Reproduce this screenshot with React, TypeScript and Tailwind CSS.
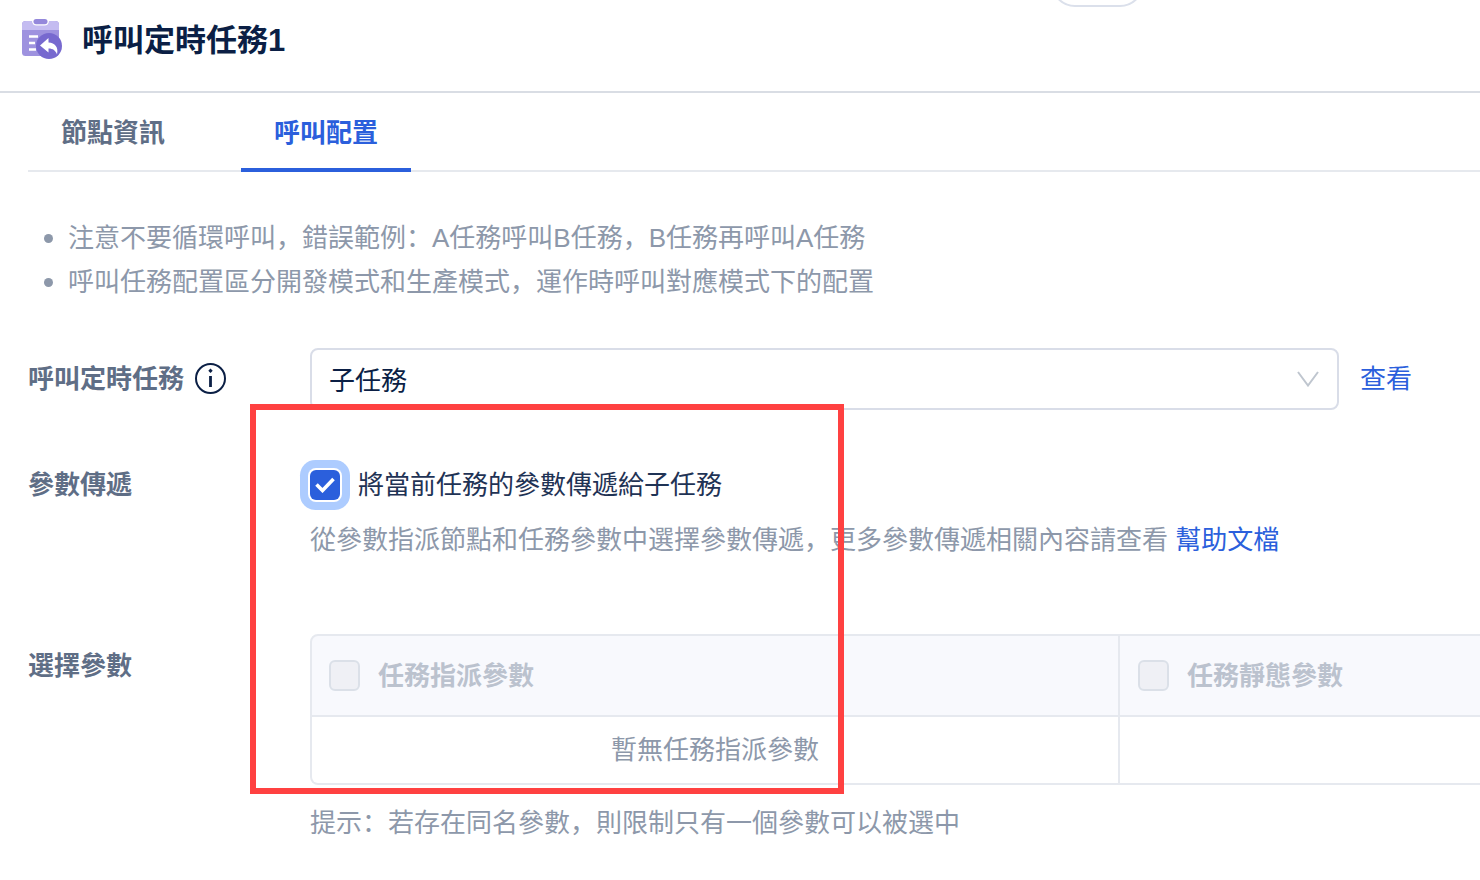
import { useState, type ReactNode } from "react";

function TaskIcon() {
  return (
    <svg viewBox="0 0 40 40" className="size-10 shrink-0" aria-hidden="true">
      <rect y="2" width="37" height="35" rx="3.500" fill="#9e92df" />
      <path d="M0 11V6a4 4 0 0 1 4-4h29a4 4 0 0 1 4 4v5z" fill="#c4bcf1" />
      <path d="M10 0h17v2a4.500 4.500 0 0 1-4.500 4.500h-8A4.500 4.500 0 0 1 10 2z" fill="#fff" />
      <rect x="11.500" y="0" width="14" height="5.200" rx="2.600" fill="#9488db" />
      <path d="M7 17.500h9M7 24h6M7 30.500h7" stroke="#fff" strokeWidth="2.400" />
      <circle cx="27" cy="27" r="13" fill="#7769cf" />
      <path d="M18 26.500l8.500-7.500v4.500c6.500.5 10.200 4.500 8.500 12-1.300-3.900-4-6-8.500-6v4z" fill="#fff" />
    </svg>
  );
}

function InfoIcon() {
  return (
    <svg viewBox="0 0 32 32" className="size-8" aria-hidden="true">
      <circle cx="16.500" cy="15.500" r="14.500" fill="none" stroke="#0b1f45" strokeWidth="2" />
      <path d="M16.500 5.500l2.200 2.200-2.200 2.200-2.200-2.200z" fill="#0b1f45" />
      <path d="M16.500 13v11" stroke="#0b1f45" strokeWidth="2.800" />
    </svg>
  );
}

function FieldLabel({ htmlFor, children }: { htmlFor: string; children: ReactNode }) {
  return (
    <label htmlFor={htmlFor} className="font-bold text-[#5f6e86]">
      {children}
    </label>
  );
}

function HeaderCheck({ label }: { label: string }) {
  return (
    <label className="flex items-center gap-[18px]">
      <input
        type="checkbox"
        disabled
        className="size-[31px] shrink-0 appearance-none rounded-md border-2 border-[#dbe0e8] bg-[#eff0f5]"
      />
      <span className="whitespace-nowrap">{label}</span>
    </label>
  );
}

const tabs = ["節點資訊", "呼叫配置"];

export default function App() {
  const [active, setActive] = useState(1);
  const [passParams, setPassParams] = useState(true);

  return (
    <div className="overflow-x-hidden bg-white font-['Liberation_Sans','Noto_Sans_CJK_SC',sans-serif] text-[26px] leading-[44px] text-[#0b1f45]">
      <header className="relative flex h-[93px] items-center gap-5 border-b-2 border-[#d9dde4] pb-[13px] pl-[22px]">
        <TaskIcon />
        <h1 className="pt-1 text-[31px] font-bold">呼叫定時任務1</h1>
        <span className="absolute bottom-full left-[1051px] -mb-[7px] h-12 w-[93px] rounded-3xl border-2 border-[#dbe0eb]" />
      </header>

      <nav className="ml-7 flex h-[79px] gap-[43px] border-b-2 border-[#e6e9ee]" role="tablist">
        {tabs.map((tab, i) => (
          <button
            key={tab}
            type="button"
            role="tab"
            aria-selected={active === i}
            onClick={() => setActive(i)}
            className={
              active === i
                ? "-mb-0.5 h-[79px] border-b-4 border-[#2b5fdc] px-[33px] pt-1 font-bold text-[#2b5fdc]"
                : "-mb-0.5 h-[79px] border-b-4 border-transparent px-[33px] pt-1 font-bold text-[#5f6e86]"
            }
          >
            {tab}
          </button>
        ))}
      </nav>

      <ul className="mt-11 pl-11 text-[#8d98aa]">
        {[
          "注意不要循環呼叫，錯誤範例：A任務呼叫B任務，B任務再呼叫A任務",
          "呼叫任務配置區分開發模式和生產模式，運作時呼叫對應模式下的配置",
        ].map((note) => (
          <li key={note} className="flex items-center gap-[15px]">
            <span className="size-[9px] shrink-0 rounded-full bg-[#8d98aa]" />
            {note}
          </li>
        ))}
      </ul>

      <main className="relative mt-11 pl-7">
        <div className="grid grid-cols-[282px_1fr]">
          <div className="flex h-[62px] items-center gap-[10px]">
            <FieldLabel htmlFor="task">呼叫定時任務</FieldLabel>
            <button type="button" aria-label="說明">
              <InfoIcon />
            </button>
          </div>
          <div className="flex items-center gap-[21px] pr-[68px]">
            <div className="grid flex-1 items-center">
              <select
                id="task"
                className="col-start-1 row-start-1 h-[62px] w-full appearance-none rounded-lg border-2 border-[#d9dde8] bg-white px-[17px] font-['Noto_Sans_CJK_SC',sans-serif]"
              >
                <option>子任務</option>
              </select>
              <svg
                viewBox="0 0 22 16"
                className="pointer-events-none col-start-1 row-start-1 mr-5 h-4 w-[22px] justify-self-end"
                aria-hidden="true"
              >
                <path d="M1 1l10 13.500L21 1" fill="none" stroke="#bfc6cf" strokeWidth="2" />
              </svg>
            </div>
            <a href="#task" className="text-[#2b5fdc]">
              查看
            </a>
          </div>
        </div>

        <div className="mt-[53px] grid grid-cols-[282px_1fr]">
          <div>
            <FieldLabel htmlFor="pass">參數傳遞</FieldLabel>
          </div>
          <div>
            <label className="flex items-center gap-[18px] text-[#1f3355]">
              <span className="grid place-items-center">
                <input
                  id="pass"
                  type="checkbox"
                  checked={passParams}
                  onChange={(e) => setPassParams(e.target.checked)}
                  className="col-start-1 row-start-1 size-[30px] appearance-none rounded-md bg-[#d9dde8] shadow-[0_0_0_2px_#fff,0_0_0_10px_#adccff] checked:bg-[#2b5fdc]"
                />
                {passParams && (
                  <svg viewBox="0 0 20 16" className="pointer-events-none col-start-1 row-start-1 h-4 w-5" aria-hidden="true">
                    <path d="M1.500 7.500l6 6L18.500 2" fill="none" stroke="#fff" strokeWidth="3.600" />
                  </svg>
                )}
              </span>
              將當前任務的參數傳遞給子任務
            </label>
            <p className="mt-[11px] whitespace-nowrap text-[#8d98aa]">
              從參數指派節點和任務參數中選擇參數傳遞，更多參數傳遞相關內容請查看{" "}
              <a href="#help" className="text-[#2b5fdc]">
                幫助文檔
              </a>
            </p>
          </div>
        </div>

        <div className="mt-[72px] grid grid-cols-[282px_1fr]">
          <h2 className="mt-[10px] font-bold text-[#5f6e86]">選擇參數</h2>
          <div>
            <table className="w-full table-fixed border-separate border-spacing-0 text-left">
              <thead className="text-[#bbc2ce]">
                <tr>
                  <th className="h-[83px] w-9/13 rounded-tl-lg border-2 border-[#e6e9ef] bg-[#f8f9fd] px-[17px] py-0">
                    <HeaderCheck label="任務指派參數" />
                  </th>
                  <th className="h-[83px] border-y-2 border-[#e6e9ef] bg-[#f8f9fd] px-[18px] py-0">
                    <HeaderCheck label="任務靜態參數" />
                  </th>
                </tr>
              </thead>
              <tbody className="text-[#8d98aa]">
                <tr>
                  <td className="h-[68px] rounded-bl-lg border-x-2 border-b-2 border-[#e6e9ef] p-0 text-center">
                    暫無任務指派參數
                  </td>
                  <td className="h-[68px] border-b-2 border-[#e6e9ef] p-0" />
                </tr>
              </tbody>
            </table>
            <p className="mt-4 text-[#8d98aa]">提示：若存在同名參數，則限制只有一個參數可以被選中</p>
          </div>
        </div>

        <div className="pointer-events-none absolute top-14 left-[250px] h-[390px] w-[594px] border-6 border-[#ff4141]" />
      </main>
    </div>
  );
}
